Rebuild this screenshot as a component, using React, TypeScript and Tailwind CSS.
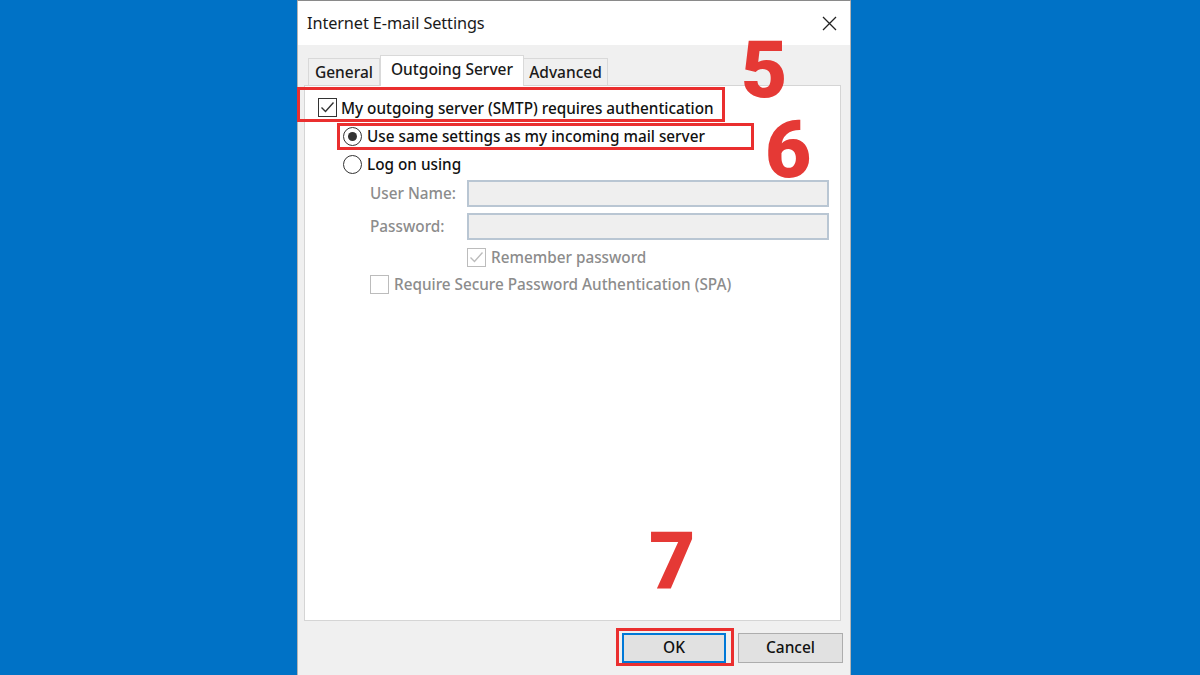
import React from "react";

function CheckBox({ checked, disabled }: { checked?: boolean; disabled?: boolean }) {
  const c = disabled ? "#bcbcbc" : "#333333";
  return (
    <div
      className={`w-[19px] h-[19px] shrink-0 border flex items-center justify-center ${
        disabled ? "border-[#bcbcbc] bg-white" : "border-[#333333] bg-white"
      }`}
    >
      {checked && (
        <svg width="17" height="17" viewBox="0 0 17 17">
          <polyline points="2.5,8.5 6.5,12.5 14.5,3.5" fill="none" stroke={c} strokeWidth="1.4" />
        </svg>
      )}
    </div>
  );
}

function Radio({ checked }: { checked?: boolean }) {
  return (
    <div className="w-[19px] h-[19px] shrink-0 rounded-full border-[1.5px] border-[#333333] bg-white flex items-center justify-center">
      {checked && <div className="w-[9px] h-[9px] rounded-full bg-[#333333]" />}
    </div>
  );
}

export default function App() {
  return (
    <div className="relative w-[1200px] h-[675px] bg-[#0072c6] overflow-hidden font-['Noto_Sans','Open_Sans',sans-serif]">
      {/* Dialog window */}
      <div className="ml-[297px] w-[554px] h-[675px] bg-[#f0f0f0] border-x border-t border-x-[#b4b4b4] border-t-[#8a8a8a] flex flex-col">
        {/* Title bar */}
        <div className="h-[44px] bg-white flex items-center justify-between pl-[9px] pr-[12px]">
          <span className="text-[16.3px] text-[#1a1a1a] tracking-[-0.1px]">Internet E-mail Settings</span>
          <svg width="15" height="15" viewBox="0 0 15 15" className="mr-[1px]">
            <path d="M1 1 L14 14 M14 1 L1 14" stroke="#222" strokeWidth="1.3" />
          </svg>
        </div>

        {/* Tabs */}
        <div className="mt-[10px] h-[30px] pl-[10px] flex items-end text-[15.5px] font-medium text-[#1a1a1a]">
          <div className="h-[27px] w-[72px] border-x border-t border-[#d9d9d9] bg-[#f0f0f0] flex items-center justify-center pt-[2px]">
            General
          </div>
          <div className="relative z-10 -mb-px h-[31px] w-[144px] border-x border-t border-[#d9d9d9] bg-white flex items-center justify-center pb-[2px]">
            Outgoing Server
          </div>
          <div className="h-[27px] w-[84px] border-r border-t border-[#d9d9d9] bg-[#f0f0f0] flex items-center justify-center pt-[2px]">
            Advanced
          </div>
        </div>

        {/* Panel */}
        <div className="ml-[6px] w-[537px] h-[536px] bg-white border border-[#d5d5d5] pt-[7px] flex flex-col text-[15.3px] font-medium">
          <div className="h-[28px] pl-[13px] flex items-center gap-[4px] text-[#111]">
            <CheckBox checked />
            <span className="pt-[2px]">My outgoing server (SMTP) requires authentication</span>
          </div>
          <div className="mt-[1px] h-[28px] pl-[38px] flex items-center gap-[5px] text-[#111]">
            <Radio checked />
            <span className="pt-[1px]">Use same settings as my incoming mail server</span>
          </div>
          <div className="h-[28px] pl-[38px] flex items-center gap-[5px] text-[#111]">
            <Radio />
            <span>Log on using</span>
          </div>
          <div className="mt-[2px] h-[27px] pl-[65px] flex items-center text-[#8c8c8c]">
            <span className="w-[97px]">User Name:</span>
            <div className="w-[362px] h-[27px] border-2 border-[#b9c6d3] bg-[#efefef]" />
          </div>
          <div className="mt-[6px] h-[27px] pl-[65px] flex items-center text-[#8c8c8c]">
            <span className="w-[97px]">Password:</span>
            <div className="w-[362px] h-[27px] border-2 border-[#b9c6d3] bg-[#efefef]" />
          </div>
          <div className="mt-[8px] h-[19px] pl-[162px] flex items-center gap-[5px] text-[#8c8c8c]">
            <CheckBox checked disabled />
            <span>Remember password</span>
          </div>
          <div className="mt-[8px] h-[19px] pl-[65px] flex items-center gap-[5px] text-[#8c8c8c]">
            <CheckBox disabled />
            <span>Require Secure Password Authentication (SPA)</span>
          </div>
        </div>

        {/* Buttons */}
        <div className="mt-[12px] pr-[7px] flex justify-end gap-[12px] text-[15.5px] font-medium text-[#111]">
          <button className="w-[104px] h-[30px] bg-[#e1e1e1] border-2 border-[#0078d7] flex items-center justify-center">
            OK
          </button>
          <button className="w-[105px] h-[30px] bg-[#e1e1e1] border border-[#adadad] flex items-center justify-center">
            Cancel
          </button>
        </div>
      </div>

      {/* Annotation boxes */}
      <div className="absolute left-[297px] top-[87px] w-[428px] h-[35px] border-[3px] border-[#ea2f2f]" />
      <div className="absolute left-[337px] top-[123px] w-[417px] h-[27px] border-[3px] border-[#ea2f2f]" />
      <div className="absolute left-[616px] top-[628px] w-[118px] h-[38px] border-[3px] border-[#ea2f2f]" />

      {/* Step numbers */}
      <div className="absolute left-[741px] top-[30px] text-[80px] leading-[80px] font-black text-[#e53935] font-['Roboto',sans-serif]">5</div>
      <div className="absolute left-[765px] top-[110px] text-[80px] leading-[80px] font-black text-[#e53935] font-['Roboto',sans-serif]">6</div>
      <div className="absolute left-[649px] top-[522px] text-[80px] leading-[80px] font-black text-[#e53935] font-['Roboto',sans-serif]">7</div>
    </div>
  );
}
